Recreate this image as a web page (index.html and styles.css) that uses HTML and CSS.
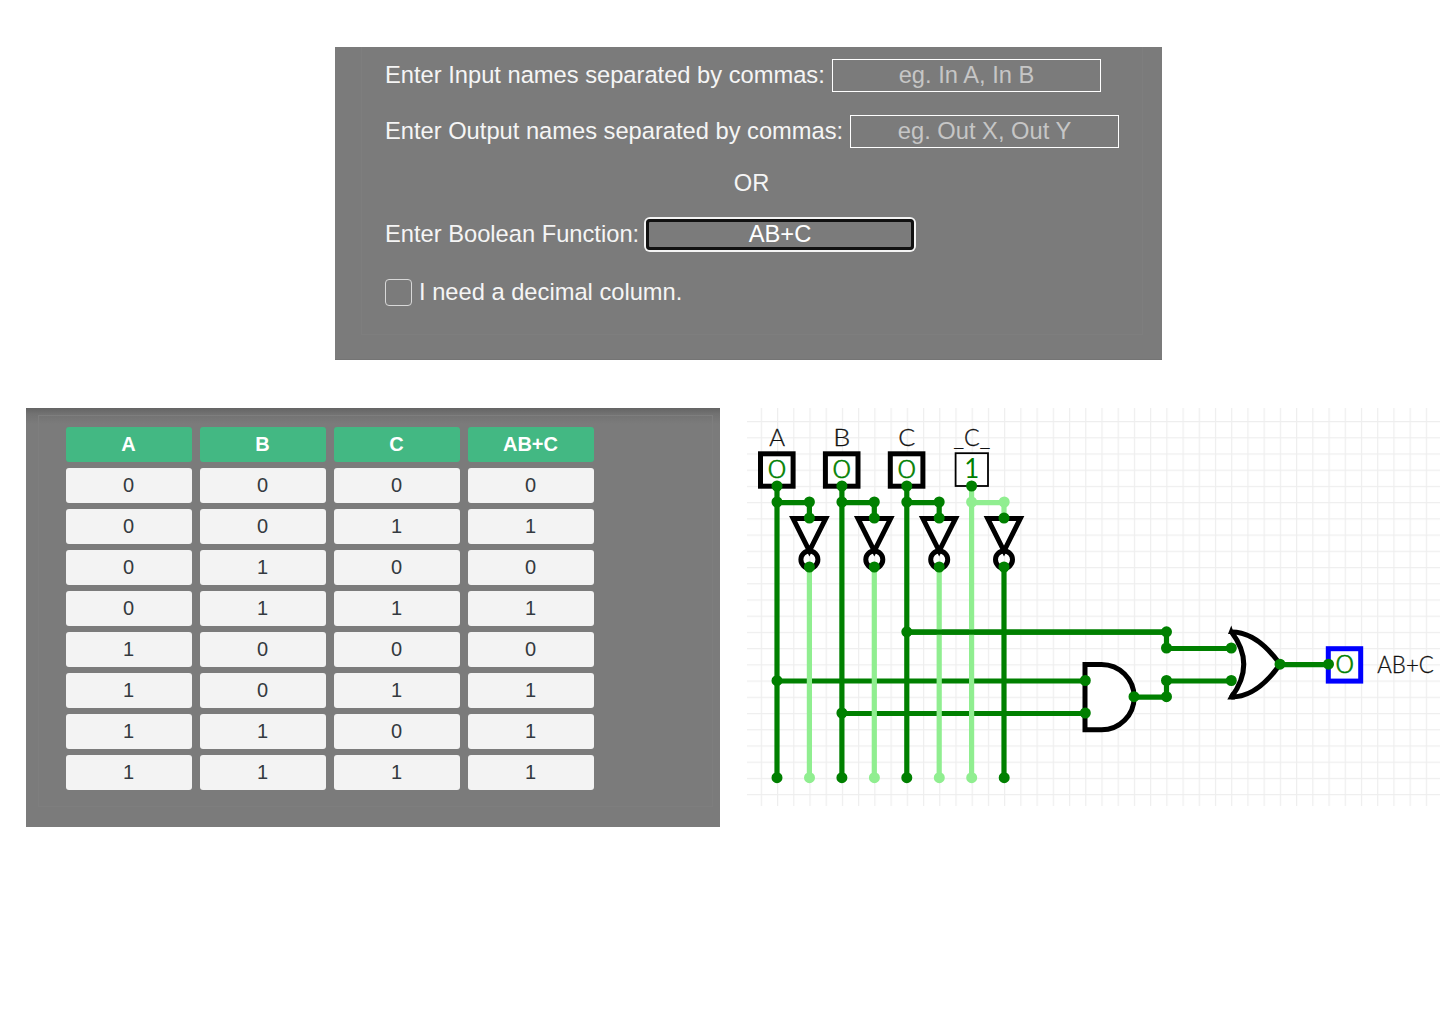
FILE: index.html
```html
<!DOCTYPE html>
<html lang="en">
<head>
<meta charset="utf-8">
<title>Combinational Analysis</title>
<link rel="stylesheet" href="styles.css">
</head>
<body>
<main class="page">
  <form class="panel form-panel">
    <div class="form-frame">
      <div class="row"><label class="label-in" for="in">Enter Input names separated by commas:</label><input id="in" class="field" placeholder="eg. In A, In B"></div>
      <div class="row"><label class="label-out" for="out">Enter Output names separated by commas:</label><input id="out" class="field" placeholder="eg. Out X, Out Y"></div>
      <div class="row or">OR</div>
      <div class="row"><label class="label-fn" for="fn">Enter Boolean Function:</label><input id="fn" class="field active" value="AB+C"></div>
      <div class="row check-row"><input type="checkbox" id="dec" class="check"><label for="dec">I need a decimal column.</label></div>
    </div>
  </form>
  <div class="results">
    <section class="panel table-panel">
      <div class="table-frame">
        <table class="truth">
          <thead><tr><th>A</th><th>B</th><th>C</th><th>AB+C</th></tr></thead>
          <tbody>
            <tr><td>0</td><td>0</td><td>0</td><td>0</td></tr>
            <tr><td>0</td><td>0</td><td>1</td><td>1</td></tr>
            <tr><td>0</td><td>1</td><td>0</td><td>0</td></tr>
            <tr><td>0</td><td>1</td><td>1</td><td>1</td></tr>
            <tr><td>1</td><td>0</td><td>0</td><td>0</td></tr>
            <tr><td>1</td><td>0</td><td>1</td><td>1</td></tr>
            <tr><td>1</td><td>1</td><td>0</td><td>1</td></tr>
            <tr><td>1</td><td>1</td><td>1</td><td>1</td></tr>
          </tbody>
        </table>
      </div>
    </section>
    <svg class="circuit" viewBox="747 408 693 398" width="693" height="398">
      <defs>
        <pattern id="grid" x="777" y="421" width="16.22" height="16.22" patternUnits="userSpaceOnUse">
          <path class="grid-line" d="M.6 0V16.22M0 .6H16.22"/>
        </pattern>
        <g id="inverter"><path class="gate" d="M-16.3 0H16.3L0 32.4Z"/><circle class="gate ring" cx="0" cy="41" r="8.5"/></g>
      </defs>
      <rect x="747" y="408" width="693" height="398" fill="url(#grid)"/>
      <rect class="in-box" x="760.5" y="453.8" width="32.6" height="32.4"/>
      <rect class="in-box" x="825.4" y="453.8" width="32.6" height="32.4"/>
      <rect class="in-box" x="890.3" y="453.8" width="32.6" height="32.4"/>
      <rect class="in-box thin" x="955.6" y="453.2" width="32.4" height="32.8"/>
      <use href="#inverter" x="809.4" y="518.6"/>
      <use href="#inverter" x="874.3" y="518.6"/>
      <use href="#inverter" x="939.2" y="518.6"/>
      <use href="#inverter" x="1004" y="518.6"/>
      <path class="gate" d="M1085 664.5H1101.5A32.6 32.6 0 0 1 1101.5 729.8H1085Z"/>
      <path class="gate or-gate" d="M1231.5 632Q1257 632 1280 664.2Q1257 697 1231.5 697Q1256 664.2 1231.5 632Z"/>
      <path d="M1228 634L1231.3 625.5L1234 634ZM1227.3 699.4L1231.5 692L1235 699.4Z"/>
      <rect class="out-box" x="1328.3" y="648.7" width="32.4" height="32.4"/>
      <path class="wire" d="M777 486V777.5M777 502.6H809.4V518M777 681H1085.4M841.9 486V777.5M841.9 502.6H874.3V518M841.9 713.5H1085.4M906.8 486V777.5M906.8 502.6H939.2V518M906.8 632.2H1166.5V648.5H1231M1134 697.2H1166.5V681H1231M1280 664.7H1328.5M1004 567V777.5"/>
      <path class="wire high" d="M809.4 567V777.5M874.3 567V777.5M939.2 567V777.5M971.6 486V777.5M971.6 502.6H1004V518"/>
      <path class="wire" d="M906.8 632.2H1166.5"/>
      <path class="node" d="M777 486h0M777 502h0M809.4 502h0M809.4 518h0M809.4 567h0M777 680.7h0M777 777.7h0M841.9 486h0M841.9 502h0M874.3 502h0M874.3 518h0M874.3 567h0M841.9 713h0M841.9 777.7h0M906.8 486h0M906.8 502h0M939.2 502h0M939.2 518h0M939.2 567h0M906.8 631.8h0M906.8 777.7h0M971.6 486h0M1004 518h0M1004 567h0M1004.2 777.7h0M1166.5 631.8h0M1166.5 648h0M1231.3 648h0M1166.5 680.5h0M1166.5 696.7h0M1231.3 680.5h0M1134 696.7h0M1085.3 680.5h0M1085.3 713h0M1280 664.2h0M1328.5 664.2h0"/>
      <path class="node high" d="M809.5 777.7h0M874.4 777.7h0M939.3 777.7h0M971.7 777.7h0M971.6 502h0M1004.2 502h0"/>
      <g class="name">
        <text x="769.2" y="446" textLength="15.8" lengthAdjust="spacingAndGlyphs">A</text>
        <text x="833.3" y="446" textLength="17" lengthAdjust="spacingAndGlyphs">B</text>
        <text x="898.2" y="446" textLength="17" lengthAdjust="spacingAndGlyphs">C</text>
        <text x="953.6" y="446" textLength="36.6" lengthAdjust="spacingAndGlyphs">_C_</text>
        <text x="1377.3" y="673" textLength="56.5" lengthAdjust="spacingAndGlyphs">AB+C</text>
      </g>
      <g class="value">
        <text x="767.9" y="478" textLength="18" lengthAdjust="spacingAndGlyphs">0</text>
        <text x="832.8" y="478" textLength="18" lengthAdjust="spacingAndGlyphs">0</text>
        <text x="897.7" y="478" textLength="18" lengthAdjust="spacingAndGlyphs">0</text>
        <text class="one" x="964.2" y="478" textLength="15" lengthAdjust="spacingAndGlyphs">1</text>
        <text x="1335.7" y="672.8" textLength="18" lengthAdjust="spacingAndGlyphs">0</text>
      </g>
    </svg>
  </div>
</main>
</body>
</html>
```
FILE: styles.css
```css
* { box-sizing: border-box; }
body { margin: 0; background: #fff; font-family: "Liberation Sans", Arial, sans-serif; }
.page { width: 1440px; height: 1024px; padding-top: 47px; overflow: hidden; }
.panel { background: #7b7b7b; }
.form-panel { width: 827px; height: 313px; margin-left: 335px; padding: 0 19px 25px 26px; border-bottom: 1px solid #747474; color: #f5f5f5; font-size: 23.7px; }
.form-frame { height: 288px; padding: 12px 0 0 23px; border: 1px solid #7e7e7e; border-top: 0; }
.row { display: flex; align-items: center; height: 33px; margin-bottom: 23px; white-space: nowrap; line-height: 30px; }
.row label { padding-bottom: 2px; }
.label-in { width: 447px; }
.label-out { width: 465px; }
.label-fn { width: 261px; }
.field { width: 269px; height: 33px; padding: 0 0 1px; border: 1.6px solid #fff; border-radius: 0; background: transparent; color: #fff; font: inherit; text-align: center; outline: 0; }
.field::placeholder { color: #c6c6c6; opacity: 1; }
.field.active { width: 268px; height: 31px; border: 3px solid #111; border-radius: 4px; box-shadow: 0 0 0 2px #f4f4f4; }
.or { width: 733px; height: 24px; margin-bottom: 23px; padding-bottom: 1px; justify-content: center; }
.row:nth-child(4) { margin-bottom: 25px; }
.check-row { gap: 7px; }
.check { appearance: none; width: 27px; height: 27px; margin: 0; border: 1.4px solid #d8d8d8; border-radius: 4px; }
.results { display: flex; gap: 27px; margin: 48px 0 0 26px; align-items: flex-start; }
.table-panel { width: 694px; height: 419px; padding: 7px 7px 0 12px; background: linear-gradient(#646464, #727272 6px, #7b7b7b 16px); }
.table-frame { height: 392px; padding: 5px 0 0 18.5px; border: 1px solid #7e7e7e; }
.truth { width: 544px; table-layout: fixed; border-collapse: separate; border-spacing: 8px 6px; font-size: 20px; text-align: center; }
.truth th, .truth td { height: 35px; padding: 0; border-radius: 3px; line-height: 23px; }
.truth th { background: #43b883; color: #fff; font-weight: bold; }
.truth td { background: #f3f3f3; color: #343a40; }
.circuit { display: block; flex: none; }
.grid-line { fill: none; stroke: #eee; stroke-width: 1.2; }
.gate { fill: #fff; stroke: #000; stroke-width: 5; stroke-miterlimit: 10; }
.gate.ring { fill: none; }
.or-gate { stroke-linejoin: bevel; }
.in-box { fill: #fff; stroke: #000; stroke-width: 5; }
.in-box.thin { stroke-width: 1.8; }
.out-box { fill: #fff; stroke: #00f; stroke-width: 5; }
.wire { fill: none; stroke: green; stroke-width: 5.2; }
.node { fill: none; stroke: green; stroke-width: 11; stroke-linecap: round; }
.high { stroke: #90ee90; }
.name { font: 300 22.5px Lato, sans-serif; fill: #111; stroke: #111; stroke-width: .3px; }
.value { font: 300 26px Lato, sans-serif; fill: green; stroke: green; stroke-width: .5px; }
.value .one { font-weight: 400; stroke: none; }
```
